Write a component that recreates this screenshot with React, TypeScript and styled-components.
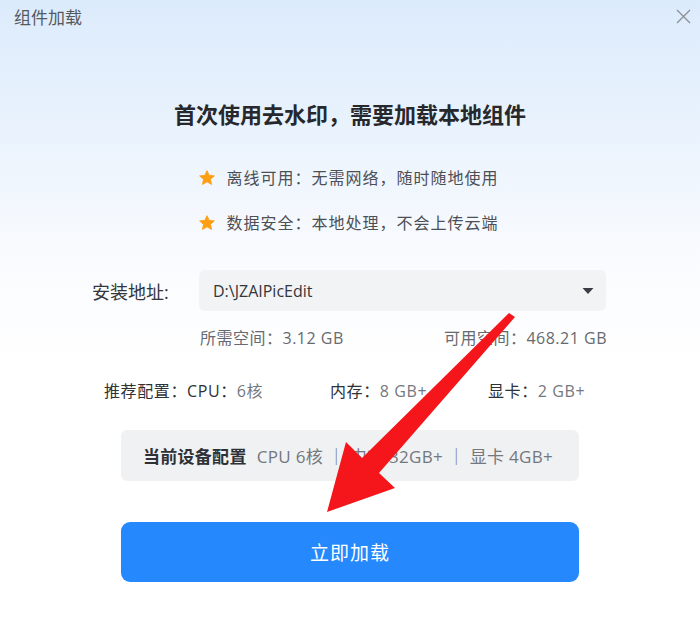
import styled, { createGlobalStyle, css } from 'styled-components'

const GlobalStyle = createGlobalStyle`
    html, body {
        margin: 0;
        padding: 0;
        background: #fff;
    }
    body {
        font-family: "Open Sans", "Noto Sans CJK SC", "Noto Sans", sans-serif;
    }
`

const StarIcon = () => (
    <svg width='18' height='18' viewBox='0 0 24 24'>
        <path
            d='M12 2.2l2.9 6.3 6.9.7-5.2 4.6 1.5 6.8L12 17.1l-6.1 3.5 1.5-6.8-5.2-4.6 6.9-.7z'
            fill='#fe9f13'
            stroke='#fe9f13'
            strokeWidth='1.2'
            strokeLinejoin='round'
        />
    </svg>
)

const CloseIcon = () => (
    <svg width='15' height='15' viewBox='0 0 15 15'>
        <path d='M1 1l13 13M14 1L1 14' stroke='#8a8f96' strokeWidth='1.3' />
    </svg>
)

const Caret = () => (
    <svg width='12' height='8' viewBox='0 0 12 8'>
        <path d='M0.5 1h11L6 7z' fill='#3a3d44' />
    </svg>
)

const Arrow = () => (
    <ArrowSvg width='700' height='619' viewBox='0 0 700 619'>
        <polygon
            points='509,313 515,317 379,473 395,488 327,512 346,442 362,458'
            fill='#f5161b'
        />
    </ArrowSvg>
)

const App = () => {
    return (
        <Dialog>
            <GlobalStyle />
            <Header>
                <HeaderTitle>组件加载</HeaderTitle>
                <CloseButton>
                    <CloseIcon />
                </CloseButton>
            </Header>
            <Body>
                <Heading>首次使用去水印，需要加载本地组件</Heading>
                <Features>
                    <Feature>
                        <StarIcon />
                        离线可用：无需网络，随时随地使用
                    </Feature>
                    <Feature>
                        <StarIcon />
                        数据安全：本地处理，不会上传云端
                    </Feature>
                </Features>
                <InstallRow>
                    <FieldLabel>安装地址:</FieldLabel>
                    <Select>
                        <span>D:\JZAIPicEdit</span>
                        <Caret />
                    </Select>
                </InstallRow>
                <SpaceRow>
                    <span>所需空间：3.12 GB</span>
                    <span>可用空间：468.21 GB</span>
                </SpaceRow>
                <SpecRow>
                    <Spec>
                        <Key>推荐配置：CPU：</Key>
                        <Val>6核</Val>
                    </Spec>
                    <Spec>
                        <Key>内存：</Key>
                        <Val>8 GB+</Val>
                    </Spec>
                    <Spec>
                        <Key>显卡：</Key>
                        <Val>2 GB+</Val>
                    </Spec>
                </SpecRow>
                <DeviceBox>
                    <DeviceLabel>当前设备配置</DeviceLabel>
                    <Val>CPU 6核 ｜ 内存 32GB+ ｜ 显卡 4GB+</Val>
                </DeviceBox>
                <PrimaryButton>立即加载</PrimaryButton>
            </Body>
            <Arrow />
        </Dialog>
    )
}

const Dialog = styled.div(
    () => css`
        position: relative;
        width: 700px;
        height: 619px;
        overflow: hidden;
        background: linear-gradient(180deg, #dcebfc 0%, #eaf3fd 22%, #fafbfe 42%, #ffffff 60%);
    `
)

const Header = styled.div(
    () => css`
        display: flex;
        align-items: center;
        justify-content: space-between;
        height: 33px;
        padding: 0 7px 0 14px;
    `
)

const HeaderTitle = styled.div(
    () => css`
        font-size: 17px;
        color: #555a61;
    `
)

const CloseButton = styled.div(
    () => css`
        display: flex;
        padding: 2px;
    `
)

const Body = styled.div(
    () => css`
        display: flex;
        flex-direction: column;
        align-items: center;
    `
)

const Heading = styled.h1(
    () => css`
        margin: 65px 0 0;
        font-size: 22px;
        line-height: 32px;
        font-weight: 700;
        color: #26282c;
    `
)

const Features = styled.div(
    () => css`
        display: flex;
        flex-direction: column;
        gap: 21px;
        margin-top: 36px;
        margin-left: -3px;
    `
)

const Feature = styled.div(
    () => css`
        display: flex;
        align-items: center;
        gap: 10px;
        font-size: 16px;
        line-height: 24px;
        letter-spacing: 1px;
        color: #4c4f55;
    `
)

const InstallRow = styled.div(
    () => css`
        display: flex;
        align-items: center;
        align-self: flex-start;
        margin-top: 35px;
        margin-left: 92px;
    `
)

const FieldLabel = styled.div(
    () => css`
        width: 107px;
        font-size: 18px;
        color: #33363b;
    `
)

const Select = styled.div(
    () => css`
        display: flex;
        align-items: center;
        justify-content: space-between;
        box-sizing: border-box;
        width: 407px;
        height: 41px;
        padding: 0 12px 0 14px;
        border-radius: 6px;
        background: #f2f3f5;
        font-size: 16px;
        color: #33363b;
    `
)

const SpaceRow = styled.div(
    () => css`
        display: flex;
        justify-content: space-between;
        align-self: flex-start;
        width: 407px;
        margin-top: 14px;
        margin-left: 200px;
        font-size: 16px;
        letter-spacing: 0.5px;
        line-height: 26px;
        color: #666a70;
    `
)

const SpecRow = styled.div(
    () => css`
        display: flex;
        align-self: flex-start;
        margin-top: 27px;
        margin-left: 104px;
        font-size: 16px;
        letter-spacing: 0.6px;
        line-height: 26px;
    `
)

const Spec = styled.div(
    () => css`
        &:nth-child(1) {
            width: 226px;
        }
        &:nth-child(2) {
            width: 158px;
        }
    `
)

const Key = styled.span(
    () => css`
        color: #2e3136;
    `
)

const Val = styled.span(
    () => css`
        color: #74787e;
    `
)

const DeviceBox = styled.div(
    () => css`
        display: flex;
        align-items: center;
        justify-content: center;
        gap: 10px;
        box-sizing: border-box;
        width: 458px;
        height: 51px;
        margin-top: 26px;
        border-radius: 6px;
        background: #f0f1f3;
        font-size: 17px;
        letter-spacing: 0.3px;
        padding-right: 4px;
    `
)

const DeviceLabel = styled.span(
    () => css`
        font-weight: 700;
        color: #2e3136;
    `
)

const PrimaryButton = styled.button(
    () => css`
        width: 458px;
        height: 60px;
        margin-top: 41px;
        border: none;
        border-radius: 9px;
        background: #2589fd;
        color: #fff;
        font-family: inherit;
        font-size: 19px;
        letter-spacing: 1px;
    `
)

const ArrowSvg = styled.svg(
    () => css`
        position: absolute;
        left: 0;
        top: 0;
        pointer-events: none;
    `
)

export default App
